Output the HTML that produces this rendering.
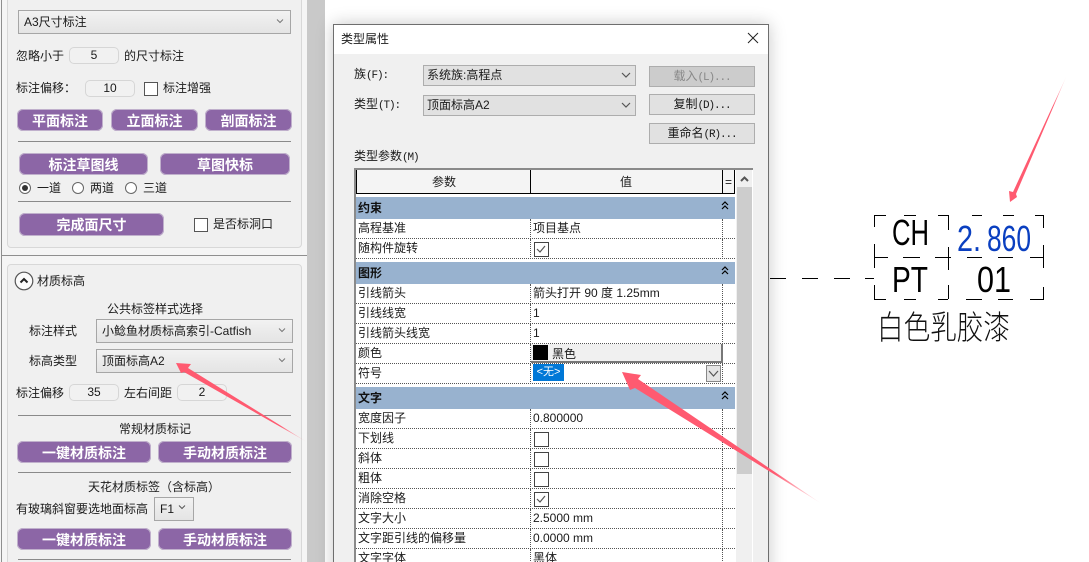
<!DOCTYPE html>
<html><head><meta charset="utf-8">
<style>
html,body{margin:0;padding:0;background:#fff;width:1089px;height:562px;overflow:hidden}
#w{position:relative;width:1089px;height:562px;overflow:hidden;font:12px/16px "Liberation Sans","Noto Sans CJK SC",sans-serif;color:#1a1a1a;background:#fff}
.a,.t,.b,.s,.i,.l,.c,.r,.ds,.db,.row,.sec,.v{position:absolute;box-sizing:border-box}
.t,.v{white-space:nowrap}
.b{height:22px;background:#8c66a6;border-radius:6px;color:#fff;font-weight:700;font-size:14px;line-height:24px;text-align:center;box-shadow:0 0 0 1px #c0b0cc inset}
.s{height:24px;background:linear-gradient(#f2f2f2,#e4e4e4);border:1px solid #a6a6a6;padding-left:5px;line-height:23px;font-size:12px}
.s svg{position:absolute;right:6px;top:7px}
.i{height:17px;width:50px;border:1px solid #d6d6d6;border-radius:5px;background:#f1f1f1;text-align:center;line-height:15px}
.l{height:1px;left:18px;width:273px;background:#8a8a8a}
.c{width:14px;height:14px;background:#fff;border:1px solid #555}
.r{width:12px;height:12px;border:1px solid #666;border-radius:50%;background:#fff}
.ds{height:21px;left:423px;width:213px;background:#e1e1e1;border:1px solid #adadad;padding-left:3px;line-height:19px;font-size:12px}
.ds svg{position:absolute;right:4px;top:6px}
.db{left:649px;width:106px;height:21px;background:#e1e1e1;border:1px solid #adadad;text-align:center;line-height:19px}
.m{font-family:"Liberation Mono","Noto Sans CJK SC",monospace;font-size:11px;letter-spacing:-1.1px}
.sec{left:356px;width:379px;height:22px;background:#98b2cf;font-weight:700;line-height:22px;padding-left:2px;color:#111}
.sec svg{position:absolute;left:365px;top:3px}
.row{left:356px;width:379px;height:20px;border-bottom:1px dotted #555;background:#fff;line-height:19px;padding-left:2px}
.row .vs{position:absolute;left:174px;top:0;height:20px;border-left:1px dotted #555}
.row .ve{position:absolute;left:366px;top:0;height:20px;border-left:1px dotted #555}
.row .v{left:177px;top:0}
.ck{position:absolute;left:178px;top:3px;width:13px;height:13px;border:1px solid #444;background:#fff}
.ck svg{position:absolute;left:1px;top:1px}
</style></head><body><div id="w">

<!-- left panel -->
<div class="a" style="left:0;top:0;width:307px;height:562px;background:#f5f5f5"></div>
<div class="a" style="left:1px;top:0;width:1px;height:562px;background:#8f8f8f"></div>
<div class="a" style="left:2px;top:255px;width:305px;height:1px;background:#8f8f8f"></div>
<div class="a" style="left:7px;top:-6px;width:295px;height:254px;background:#f0f0f0;border:1px solid #d8d8d8;border-radius:4px"></div>
<div class="a" style="left:7px;top:264px;width:295px;height:310px;background:#f0f0f0;border:1px solid #d8d8d8;border-radius:4px"></div>
<div class="a" style="left:307px;top:0;width:18px;height:562px;background:#c9c9c9"></div>

<div class="s" style="left:18px;top:10px;width:273px">A3尺寸标注<svg width="8" height="6"><path d="M1 1.5L4 4.5L7 1.5" fill="none" stroke="#777"/></svg></div>
<div class="t" style="left:16px;top:48px">忽略小于</div><div class="i" style="left:69px;top:47px">5</div><div class="t" style="left:124px;top:48px">的尺寸标注</div>
<div class="t" style="left:16px;top:80px">标注偏移：</div><div class="i" style="left:85px;top:80px">10</div>
<div class="c" style="left:144px;top:82px"></div><div class="t" style="left:163px;top:80px">标注增强</div>
<div class="b" style="left:17px;top:109px;width:86px">平面标注</div>
<div class="b" style="left:111px;top:109px;width:87px">立面标注</div>
<div class="b" style="left:205px;top:109px;width:87px">剖面标注</div>
<div class="l" style="top:141px"></div>
<div class="b" style="left:19px;top:153px;width:129px">标注草图线</div>
<div class="b" style="left:160px;top:153px;width:130px">草图快标</div>
<div class="r" style="left:19px;top:182px"></div><div class="a" style="left:22px;top:185px;width:6px;height:6px;border-radius:50%;background:#333"></div>
<div class="t" style="left:37px;top:180px">一道</div>
<div class="r" style="left:72px;top:182px"></div><div class="t" style="left:90px;top:180px">两道</div>
<div class="r" style="left:125px;top:182px"></div><div class="t" style="left:143px;top:180px">三道</div>
<div class="l" style="top:201px"></div>
<div class="b" style="left:19px;top:213px;width:145px;height:23px">完成面尺寸</div>
<div class="c" style="left:194px;top:218px"></div><div class="t" style="left:213px;top:216px">是否标洞口</div>

<svg class="a" style="left:14px;top:271px" width="20" height="20"><circle cx="10" cy="10" r="8.800" fill="#fbfbfb" stroke="#555" stroke-width="1.200"/><path d="M6.500 11.500L10 8L13.500 11.500" fill="none" stroke="#222" stroke-width="2"/></svg>
<div class="t" style="left:37px;top:273px">材质标高</div>
<div class="t" style="left:107px;top:301px">公共标签样式选择</div>
<div class="t" style="left:29px;top:323px">标注样式</div>
<div class="s" style="left:96px;top:319px;width:197px">小鲶鱼材质标高索引-Catfish<svg width="8" height="6"><path d="M1 1.500L4 4.500L7 1.500" fill="none" stroke="#777"/></svg></div>
<div class="t" style="left:29px;top:353px">标高类型</div>
<div class="s" style="left:96px;top:349px;width:197px">顶面标高A2<svg width="8" height="6"><path d="M1 1.500L4 4.500L7 1.500" fill="none" stroke="#777"/></svg></div>
<div class="t" style="left:16px;top:385px">标注偏移</div><div class="i" style="left:69px;top:384px">35</div>
<div class="t" style="left:124px;top:385px">左右间距</div><div class="i" style="left:177px;top:384px">2</div>
<div class="l" style="top:415px"></div>
<div class="t" style="left:119px;top:421px">常规材质标记</div>
<div class="b" style="left:17px;top:441px;width:134px">一键材质标注</div>
<div class="b" style="left:158px;top:441px;width:134px">手动材质标注</div>
<div class="l" style="top:472px"></div>
<div class="t" style="left:88px;top:479px">天花材质标签（含标高）</div>
<div class="t" style="left:16px;top:501px">有玻璃斜窗要选地面标高</div>
<div class="s" style="left:154px;top:497px;width:40px">F1<svg width="8" height="6" style="right:7px;top:6px"><path d="M1 1.500L4 4.500L7 1.500" fill="none" stroke="#555"/></svg></div>
<div class="b" style="left:17px;top:528px;width:134px">一键材质标注</div>
<div class="b" style="left:158px;top:528px;width:134px">手动材质标注</div>
<div class="l" style="top:559px"></div>

<!-- dialog -->
<div class="a" style="left:333px;top:24px;width:436px;height:560px;background:#f0f0f0;border:1px solid #6e6e6e;box-shadow:0 0 16px rgba(0,0,0,.22)"></div>
<div class="a" style="left:334px;top:25px;width:434px;height:29px;background:#fff"></div>
<div class="t" style="left:341px;top:31px">类型属性</div>
<svg class="a" style="left:747px;top:32px" width="12" height="12"><path d="M1 1L11 11M11 1L1 11" stroke="#222" fill="none"/></svg>

<div class="t" style="left:354px;top:66px">族<span class="m">(F):</span></div>
<div class="ds" style="top:65px">系统族:高程点<svg width="10" height="7"><path d="M1 1L5 5L9 1" fill="none" stroke="#555" stroke-width="1.200"/></svg></div>
<div class="db" style="top:66px;background:#ccc;color:#888">载入<span class="m">(L)...</span></div>
<div class="t" style="left:354px;top:96px">类型<span class="m">(T):</span></div>
<div class="ds" style="top:95px">顶面标高A2<svg width="10" height="7"><path d="M1 1L5 5L9 1" fill="none" stroke="#555" stroke-width="1.200"/></svg></div>
<div class="db" style="top:94px">复制<span class="m">(D)...</span></div>
<div class="db" style="top:123px">重命名<span class="m">(R)...</span></div>
<div class="t" style="left:354px;top:148px">类型参数<span class="m">(M)</span></div>

<!-- table -->
<div class="a" style="left:354px;top:168px;width:399px;height:420px;background:#fff;border:1px solid #8a8a8a;border-width:2px 0 0 2px"></div>
<div class="a" style="left:356px;top:170px;width:379px;height:24px;background:#f4f4f4;border-bottom:1px solid #000;border-left:1px solid #000"></div>
<div class="a" style="left:530px;top:170px;width:1px;height:23px;background:#000"></div>
<div class="a" style="left:722px;top:170px;width:1px;height:23px;background:#000"></div>
<div class="a" style="left:734px;top:170px;width:1px;height:23px;background:#000"></div>
<div class="t" style="left:432px;top:174px">参数</div>
<div class="t" style="left:620px;top:174px">值</div>
<div class="t" style="left:725px;top:174px">=</div>
<div class="a" style="left:736px;top:170px;width:16px;height:400px;background:#f0f0f0"></div>
<div class="a" style="left:737px;top:187px;width:15px;height:287px;background:#cdcdcd"></div>
<svg class="a" style="left:740px;top:176px" width="9" height="7"><path d="M1 5L4.500 1.500L8 5" fill="none" stroke="#555" stroke-width="2"/></svg>

<div class="sec" style="top:197px">约束<svg width="8" height="12"><path d="M1 5L4 2L7 5M1 9L4 6L7 9" fill="none" stroke="#000" stroke-width="1.200"/></svg></div>
<div class="row" style="top:219px">高程基准<i class="vs"></i><i class="ve"></i><span class="v">项目基点</span></div>
<div class="row" style="top:239px">随构件旋转<i class="vs"></i><i class="ve"></i><span class="ck"><svg width="10" height="10"><path d="M1 5L4 8L9 2" fill="none" stroke="#555" stroke-width="1.200"/></svg></span></div>
<div class="sec" style="top:262px">图形<svg width="8" height="12"><path d="M1 5L4 2L7 5M1 9L4 6L7 9" fill="none" stroke="#000" stroke-width="1.200"/></svg></div>
<div class="row" style="top:284px">引线箭头<i class="vs"></i><i class="ve"></i><span class="v">箭头打开 90 度 1.25mm</span></div>
<div class="row" style="top:304px">引线线宽<i class="vs"></i><i class="ve"></i><span class="v">1</span></div>
<div class="row" style="top:324px">引线箭头线宽<i class="vs"></i><i class="ve"></i><span class="v">1</span></div>
<div class="row" style="top:344px">颜色<i class="vs"></i><i class="ve"></i></div>
<div class="a" style="left:531px;top:344px;width:192px;height:19px;background:#f0f0f0;border-right:2px solid #777;border-bottom:2px solid #777"></div>
<div class="a" style="left:533px;top:345px;width:15px;height:15px;background:#000"></div>
<div class="t" style="left:552px;top:346px">黑色</div>
<div class="row" style="top:364px;height:20px">符号<i class="vs"></i><i class="ve"></i></div>
<div class="a" style="left:533px;top:364px;width:31px;height:17px;background:#0078d7;color:#fff;line-height:16px;text-align:center;font-size:11px">&lt;无&gt;</div>
<div class="a" style="left:706px;top:365px;width:15px;height:17px;background:#e4e4e4;border:1px solid #888"></div>
<svg class="a" style="left:708px;top:370px" width="11" height="8"><path d="M1 1L5.500 6L10 1" fill="none" stroke="#555" stroke-width="1.200"/></svg>
<div class="sec" style="top:387px">文字<svg width="8" height="12"><path d="M1 5L4 2L7 5M1 9L4 6L7 9" fill="none" stroke="#000" stroke-width="1.200"/></svg></div>
<div class="row" style="top:409px">宽度因子<i class="vs"></i><i class="ve"></i><span class="v">0.800000</span></div>
<div class="row" style="top:429px">下划线<i class="vs"></i><i class="ve"></i><span class="ck"></span></div>
<div class="row" style="top:449px">斜体<i class="vs"></i><i class="ve"></i><span class="ck"></span></div>
<div class="row" style="top:469px">粗体<i class="vs"></i><i class="ve"></i><span class="ck"></span></div>
<div class="row" style="top:489px">消除空格<i class="vs"></i><i class="ve"></i><span class="ck"><svg width="10" height="10"><path d="M1 5L4 8L9 2" fill="none" stroke="#555" stroke-width="1.200"/></svg></span></div>
<div class="row" style="top:509px">文字大小<i class="vs"></i><i class="ve"></i><span class="v">2.5000 mm</span></div>
<div class="row" style="top:529px">文字距引线的偏移量<i class="vs"></i><i class="ve"></i><span class="v">0.0000 mm</span></div>
<div class="row" style="top:549px">文字字体<i class="vs"></i><i class="ve"></i><span class="v">黑体</span></div>

<!-- overlay drawing -->
<svg class="a" style="left:0;top:0" width="1089" height="562">
<defs>
<linearGradient id="g1" gradientUnits="userSpaceOnUse" x1="280" y1="425" x2="307" y2="442"><stop offset="0" stop-color="#ff5a70"/><stop offset="1" stop-color="#ff5a70" stop-opacity="0"/></linearGradient>
<linearGradient id="g2" gradientUnits="userSpaceOnUse" x1="775" y1="472" x2="822" y2="504"><stop offset="0" stop-color="#ff5a70"/><stop offset="1" stop-color="#ff5a70" stop-opacity="0"/></linearGradient>
<linearGradient id="g3" gradientUnits="userSpaceOnUse" x1="1052" y1="105" x2="1067" y2="75"><stop offset="0" stop-color="#ff5a70"/><stop offset="1" stop-color="#ff5a70" stop-opacity="0"/></linearGradient>
</defs>
<polygon points="176,363 191,364 188,368 307,442 184,372 181,373" fill="url(#g1)"/>
<polygon points="622,372 641,375 638,379 822,504 635,388 630,390" fill="url(#g2)"/>
<polygon points="1010,202 1009,191 1013,192 1067,75 1016,194 1017,197" fill="url(#g3)"/>
<g stroke="#000" stroke-width="1" fill="none" shape-rendering="crispEdges">
<path d="M770 278.500H786M802 278.500H818M834 278.500H850M865 278.500H874"/>
<path d="M874 215.500H886M904 215.500H916M938 215.500H948M972 215.500H982M1003 215.500H1014M1035 215.500H1044"/>
<path d="M874 257.500H888M903 257.500H920M935 257.500H951M967 257.500H982M998 257.500H1013M1030 257.500H1044"/>
<path d="M874 299.500H886M904 299.500H916M938 299.500H948M966 299.500H982M998 299.500H1013M1030 299.500H1044"/>
<path d="M874.500 215V227M874.500 244V268M874.500 285V299M948.500 215V230M948.500 247V270M948.500 285V299M1043.500 215V228M1043.500 245V268M1043.500 287V299"/>
</g>
<g font-family="Liberation Sans" font-size="36" fill="#000">
<text x="892" y="245" textLength="37" lengthAdjust="spacingAndGlyphs">CH</text>
<text x="892" y="292" textLength="36" lengthAdjust="spacingAndGlyphs">PT</text>
<text x="977" y="292" textLength="34" lengthAdjust="spacingAndGlyphs">01</text>
<g fill="#0a3fc0">
<text x="957" y="251" textLength="24" lengthAdjust="spacingAndGlyphs">2.</text>
<text x="987" y="251" textLength="44" lengthAdjust="spacingAndGlyphs">860</text>
</g>
</g>
<text x="877" y="339" font-family="Noto Sans CJK SC,sans-serif" font-weight="300" font-size="33" fill="#111" textLength="133" lengthAdjust="spacingAndGlyphs">白色乳胶漆</text>
</svg>
</div></body></html>
